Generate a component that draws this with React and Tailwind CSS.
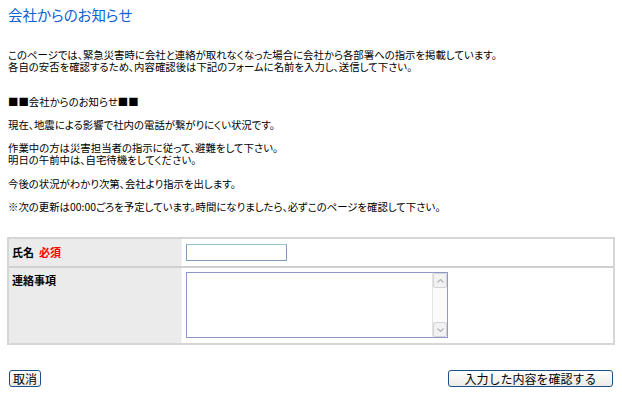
import React from 'react';

const jp = "font-['MS_PGothic','Noto_Sans_CJK_JP',sans-serif]";

function Line({ children, className = '' }) {
    return <p className={`text-[10.4px] leading-[12px] [font-feature-settings:'palt'] ${className}`}>{children}</p>;
}

export default function App() {
    return (
        <div className={`w-[622px] h-[396px] bg-white text-black ${jp} px-[8px] pt-[6px]`}>
            <h1 className="text-[14.5px] leading-[18px] text-[#0a5fd2] [font-feature-settings:'palt']">会社からのお知らせ</h1>

            {/* 説明文 */}
            <Line className="mt-[25px]">
                このページでは、緊急災害時に会社と連絡が取れなくなった場合に会社から各部署への指示を掲載しています。<br />
                各自の安否を確認するため、内容確認後は下記のフォームに名前を入力し、送信して下さい。
            </Line>

            {/* お知らせ本文 */}
            <Line className="mt-[23px]">■■会社からのお知らせ■■</Line>
            <Line className="mt-[11px]">現在、地震による影響で社内の電話が繋がりにくい状況です。</Line>
            <Line className="mt-[11px]">
                作業中の方は災害担当者の指示に従って、避難をして下さい。<br />
                明日の午前中は、自宅待機をしてください。
            </Line>
            <Line className="mt-[12px]">今後の状況がわかり次第、会社より指示を出します。</Line>
            <Line className="mt-[11px]">※次の更新は00:00ごろを予定しています。時間になりましたら、必ずこのページを確認して下さい。</Line>

            {/* フォーム */}
            <div className="mt-[24px] ml-[-1px] w-[608px] border-2 border-[#d6d6d6]">
                <div className="flex h-[29px] border-b-2 border-[#d0d0d0]">
                    <div className="w-[173px] bg-[#ebebeb] border-r border-[#f4f4f4] pl-[3px] flex items-center text-[11px] font-bold">
                        氏名<span className="ml-[5px] text-[#ff0000]">必須</span>
                    </div>
                    <div className="flex-1 pl-[4px] flex items-center">
                        <input type="text" className="w-[101px] h-[17px] border border-[#7f9db9] border-t-[#9cc7d0] outline-none bg-white" />
                    </div>
                </div>
                <div className="flex h-[75px]">
                    <div className="w-[173px] bg-[#ebebeb] border-r border-[#f4f4f4] pl-[3px] pt-[4px] text-[11px] font-bold">連絡事項</div>
                    <div className="flex-1 pl-[4px] pt-[4px]">
                        <div className="flex w-[262px] h-[66px] border border-[#8f96c8]">
                            <textarea className="flex-1 resize-none outline-none overflow-hidden" />
                            <div className="w-[15px] flex flex-col justify-between bg-[#fbfbfb] border-l border-[#e4e4e4]">
                                <div className="h-[15px] border border-[#d4d4d4] bg-[#f2f2f2] rounded-[2px] flex items-center justify-center">
                                    <svg width="7" height="4" viewBox="0 0 7 4"><path d="M0.5 3.5 L3.5 0.5 L6.5 3.5" fill="none" stroke="#b5b5b5" strokeWidth="1.2" /></svg>
                                </div>
                                <div className="h-[15px] border border-[#d4d4d4] bg-[#f2f2f2] rounded-[2px] flex items-center justify-center">
                                    <svg width="7" height="4" viewBox="0 0 7 4"><path d="M0.5 0.5 L3.5 3.5 L6.5 0.5" fill="none" stroke="#b5b5b5" strokeWidth="1.2" /></svg>
                                </div>
                            </div>
                        </div>
                    </div>
                </div>
            </div>

            {/* ボタン */}
            <div className="mt-[25px] flex justify-between pr-[1px]">
                <button className="ml-[1px] h-[17px] px-[3px] text-[12px] leading-[13px] border border-[#1c4f8c] rounded-[3px] bg-gradient-to-b from-white to-[#ecebe6]">取消</button>
                <button className="w-[165px] h-[17px] text-[12px] leading-[13px] border border-[#1c4f8c] rounded-[3px] bg-gradient-to-b from-white to-[#ecebe6]">入力した内容を確認する</button>
            </div>
        </div>
    );
}
